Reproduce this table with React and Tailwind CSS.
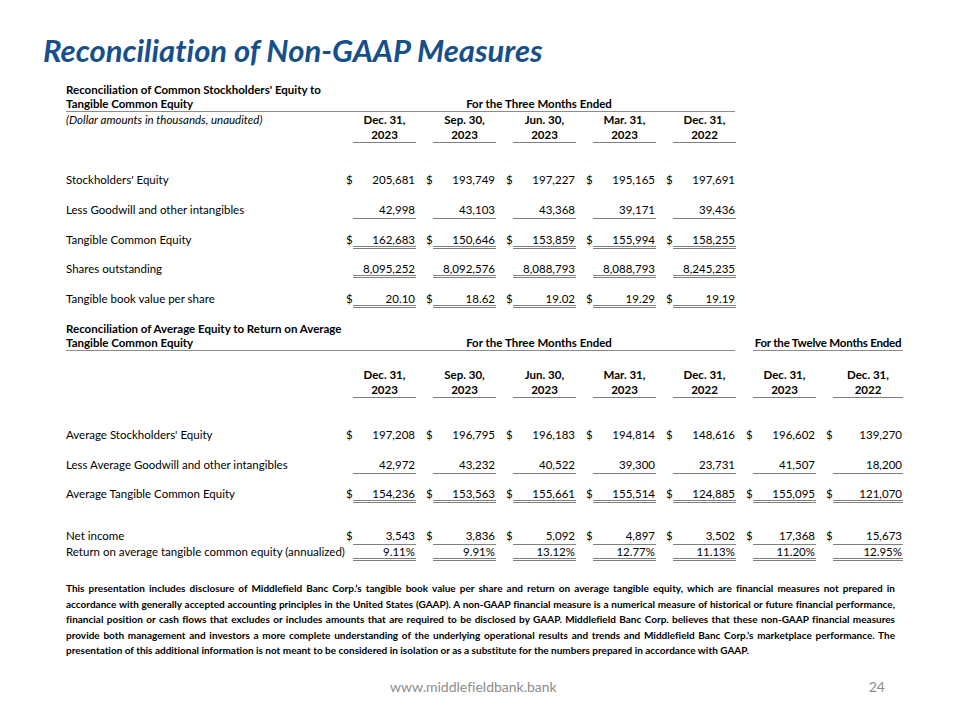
import React from "react";

const LINE1 = "border-b border-[#7f7f7f]";
const LINE2 = "border-b-[3px] border-double border-[#7f7f7f]";

function Cell({ dollar, value, line, last }) {
  return (
    <div className={last ? "flex w-[80px] pl-[3px]" : "flex w-[80px] pl-[3px] pr-[7px]"}>
      <span className="w-[7px]">{dollar ? "$" : ""}</span>
      <span className={"flex-1 text-right pr-[1px] -mb-[2px] " + (line || "")}>{value}</span>
    </div>
  );
}

function HeadCell({ a, b, last }) {
  return (
    <div className={last ? "flex w-[80px] pl-[10px] flex-col items-stretch font-bold" : "flex w-[80px] pl-[10px] pr-[7px] flex-col items-stretch font-bold"}>
      <div className="text-center h-[15px]">{a}</div>
      <div className={"text-center h-[16px] " + LINE1}>{b}</div>
    </div>
  );
}

function DataRow({ label, values, dollar, line, n }) {
  return (
    <div className="flex h-[15px] leading-[15px]">
      <div className="w-[277px] whitespace-nowrap">{label}</div>
      {values.map((v, i) => (
        <Cell key={i} dollar={dollar} value={v} line={line} last={i === n - 1 && n === 7} />
      ))}
    </div>
  );
}

const t1 = [
  { label: "Stockholders' Equity", dollar: true, line: "", values: ["205,681", "193,749", "197,227", "195,165", "197,691"] },
  { label: "Less Goodwill and other intangibles", dollar: false, line: LINE1, values: ["42,998", "43,103", "43,368", "39,171", "39,436"] },
  { label: "Tangible Common Equity", dollar: true, line: LINE2, values: ["162,683", "150,646", "153,859", "155,994", "158,255"] },
  { label: "Shares outstanding", dollar: false, line: LINE2, values: ["8,095,252", "8,092,576", "8,088,793", "8,088,793", "8,245,235"] },
  { label: "Tangible book value per share", dollar: true, line: LINE2, values: ["20.10", "18.62", "19.02", "19.29", "19.19"] },
];

const t2 = [
  { label: "Average Stockholders' Equity", dollar: true, line: "", values: ["197,208", "196,795", "196,183", "194,814", "148,616", "196,602", "139,270"] },
  { label: "Less Average Goodwill and other intangibles", dollar: false, line: LINE1, values: ["42,972", "43,232", "40,522", "39,300", "23,731", "41,507", "18,200"] },
  { label: "Average Tangible Common Equity", dollar: true, line: LINE2, values: ["154,236", "153,563", "155,661", "155,514", "124,885", "155,095", "121,070"] },
];
const netIncome = { label: "Net income", dollar: true, line: LINE1, values: ["3,543", "3,836", "5,092", "4,897", "3,502", "17,368", "15,673"] };
const ret = { label: "Return on average tangible common equity (annualized)", dollar: false, line: LINE2, values: ["9.11%", "9.91%", "13.12%", "12.77%", "11.13%", "11.20%", "12.95%"] };

const para = [
  "This presentation includes disclosure of Middlefield Banc Corp.’s tangible book value per share and return on average tangible equity, which are financial measures not prepared in",
  "accordance with generally accepted accounting principles in the United States (GAAP). A non-GAAP financial measure is a numerical measure of historical or future financial performance,",
  "financial position or cash flows that excludes or includes amounts that are required to be disclosed by GAAP. Middlefield Banc Corp. believes that these non-GAAP financial measures",
  "provide both management and investors a more complete understanding of the underlying operational results and trends and Middlefield Banc Corp.’s marketplace performance. The",
];
const paraLast = "presentation of this additional information is not meant to be considered in isolation or as a substitute for the numbers prepared in accordance with GAAP.";

export default function App() {
  return (
    <div className="w-[960px] h-[720px] bg-white text-black relative overflow-hidden font-['Lato',sans-serif] [font-variant-ligatures:none]">
      <div className="pl-[43px] pt-[32px] h-[67px] leading-[36px] text-[31px] font-bold italic text-[#164f8a] whitespace-nowrap">
        Reconciliation of Non-GAAP Measures
      </div>

      <div className="pl-[66px] text-[11.5px]">
        {/* Table 1 */}
        <div className="mt-[16px] font-bold h-[14px] leading-[14px] whitespace-nowrap">Reconciliation of Common Stockholders' Equity to</div>
        <div className="flex h-[15px] leading-[14px] font-bold">
          <div className={"flex w-[669px] " + LINE1 + " border-[#8c8c8c]"}>
            <div className="w-[277px]">Tangible Common Equity</div>
            <div className="w-[392px] text-center">For the Three Months Ended</div>
          </div>
        </div>
        <div className="flex leading-[15px]">
          <div className="w-[277px] italic">(Dollar amounts in thousands, unaudited)</div>
          <HeadCell a="Dec. 31," b="2023" />
          <HeadCell a="Sep. 30," b="2023" />
          <HeadCell a="Jun. 30," b="2023" />
          <HeadCell a="Mar. 31," b="2023" />
          <HeadCell a="Dec. 31," b="2022" />
        </div>
        <div className="mt-[29px] flex flex-col gap-[14.8px]">
          {t1.map((r, i) => (
            <DataRow key={i} {...r} n={5} />
          ))}
        </div>

        {/* Table 2 */}
        <div className="mt-[16px] font-bold h-[14px] leading-[14px] whitespace-nowrap">Reconciliation of Average Equity to Return on Average</div>
        <div className="flex h-[15px] leading-[14px] font-bold">
          <div className={"flex w-[669px] " + LINE1 + " border-[#8c8c8c]"}>
            <div className="w-[277px]">Tangible Common Equity</div>
            <div className="w-[392px] text-center">For the Three Months Ended</div>
          </div>
          <div className={"ml-[18px] w-[150px] text-center whitespace-nowrap tracking-[-0.2px] " + LINE1 + " border-[#8c8c8c]"}>For the Twelve Months Ended</div>
        </div>
        <div className="flex leading-[15px] mt-[16px]">
          <div className="w-[277px]"></div>
          <HeadCell a="Dec. 31," b="2023" />
          <HeadCell a="Sep. 30," b="2023" />
          <HeadCell a="Jun. 30," b="2023" />
          <HeadCell a="Mar. 31," b="2023" />
          <HeadCell a="Dec. 31," b="2022" />
          <HeadCell a="Dec. 31," b="2023" />
          <HeadCell a="Dec. 31," b="2022" last />
        </div>
        <div className="mt-[29px] flex flex-col gap-[14.5px]">
          {t2.map((r, i) => (
            <DataRow key={i} {...r} n={7} />
          ))}
        </div>
        <div className="mt-[27px] flex flex-col gap-[1px]">
          <DataRow {...netIncome} n={7} />
          <DataRow {...ret} n={7} />
        </div>

        {/* Paragraph */}
        <div className="mt-[22px] w-[829px] text-[10px] font-bold leading-[15.5px]">
          {para.map((l, i) => (
            <div key={i} className="text-justify [text-align-last:justify] whitespace-nowrap">{l}</div>
          ))}
          <div className="whitespace-nowrap">{paraLast}</div>
        </div>
      </div>

      <div className="absolute left-0 top-[678px] w-full flex text-[14px] text-[#8c8c8c] leading-[18px]">
        <div className="ml-[390px]">www.middlefieldbank.bank</div>
        <div className="ml-auto mr-[75px]">24</div>
      </div>
    </div>
  );
}
